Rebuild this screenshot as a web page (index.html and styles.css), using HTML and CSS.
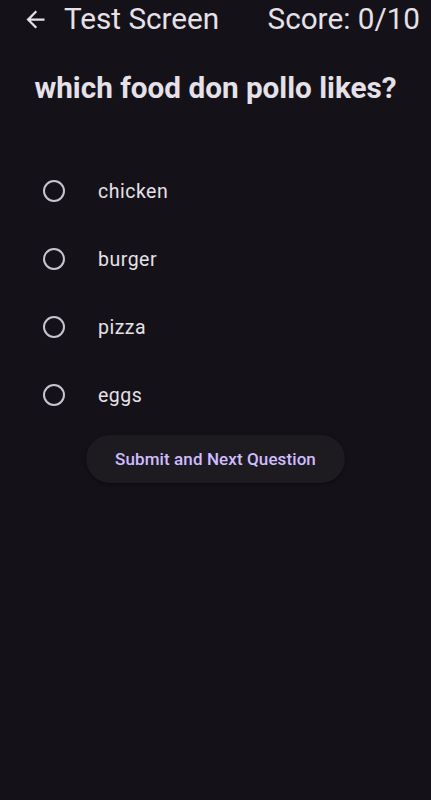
FILE: index.html
```html
<!DOCTYPE html>
<html>
<head>
<meta charset="utf-8">
<link rel="stylesheet" href="styles.css">
</head>
<body>
<header class="appbar">
  <svg class="back" width="27" height="27" viewBox="0 0 24 24"><path d="M20 11H7.83l5.59-5.59L12 4l-8 8 8 8 1.41-1.41L7.83 13H20v-2z" fill="#E6E0E9"/></svg>
  <span class="title">Test Screen</span>
  <span class="score">Score: 0/10</span>
</header>
<main class="content">
  <h1 class="question">which food don pollo likes?</h1>
  <ul class="options">
    <li class="option"><span class="radio"></span><span class="label">chicken</span></li>
    <li class="option"><span class="radio"></span><span class="label">burger</span></li>
    <li class="option"><span class="radio"></span><span class="label">pizza</span></li>
    <li class="option"><span class="radio"></span><span class="label">eggs</span></li>
  </ul>
  <button class="submit">Submit and Next Question</button>
</main>
</body>
</html>
```
FILE: styles.css
```css
html, body {
  margin: 0;
  padding: 0;
  background: #141218;
  height: 100%;
}
body {
  font-family: Roboto, "Noto Sans", sans-serif;
  color: #E6E0E9;
}
.appbar {
  height: 36px;
  display: flex;
  align-items: center;
  padding: 0 11px 0 22px;
}
.back {
  flex: none;
  margin-top: 2px;
}
.title {
  margin-left: 15px;
  font-size: 29.7px;
  flex: 1;
}
.score {
  font-size: 29.7px;
}
.content {
  display: flex;
  flex-direction: column;
  align-items: center;
}
.question {
  margin: 36px 0 0;
  font-size: 29.7px;
  font-weight: 700;
  line-height: 32px;
}
.options {
  list-style: none;
  margin: 53px 0 0;
  padding: 0;
  align-self: stretch;
}
.option {
  height: 68px;
  display: flex;
  align-items: center;
  padding-left: 43px;
}
.radio {
  width: 18px;
  height: 18px;
  border: 2px solid #CAC4D0;
  border-radius: 50%;
  flex: none;
}
.label {
  margin-left: 33px;
  font-size: 19.5px;
  letter-spacing: 0.5px;
}
.submit {
  margin-top: 6px;
  height: 48px;
  padding: 0 29px;
  border: none;
  border-radius: 24px;
  background: #1D1B20;
  color: #D0BCFF;
  font-family: Roboto, sans-serif;
  font-size: 17px;
  font-weight: 500;
  letter-spacing: 0.1px;
  box-shadow: 0 1px 2px rgba(0,0,0,0.3), 0 1px 3px 1px rgba(0,0,0,0.15);
}
```
